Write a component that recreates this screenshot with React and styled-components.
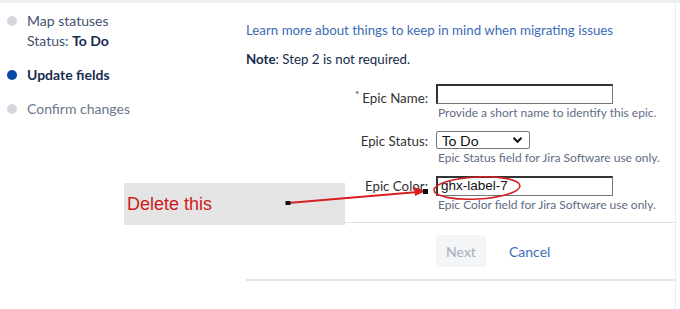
import React from "react";
import styled, { createGlobalStyle } from "styled-components";

const Global = createGlobalStyle`
  html, body {
    margin: 0;
    padding: 0;
    background: #fff;
  }
  body {
    font-family: Lato, "Open Sans", sans-serif;
    color: #172b4d;
  }
`;

const steps = [
  { title: "Map statuses", sub: "To Do", state: "done" },
  { title: "Update fields", state: "current" },
  { title: "Confirm changes", state: "todo" },
];

const fields = [
  {
    label: "Epic Name:",
    required: true,
    kind: "text",
    value: "",
    help: "Provide a short name to identify this epic.",
  },
  {
    label: "Epic Status:",
    kind: "select",
    value: "To Do",
    help: "Epic Status field for Jira Software use only.",
  },
  {
    label: "Epic Color:",
    kind: "text",
    value: "ghx-label-7",
    help: "Epic Color field for Jira Software use only.",
  },
];

const App = () => {
  return (
    <Page>
      <Global />
      <TopStrip />
      <Layout>
        <Sidebar>
          {steps.map((s) => (
            <Step key={s.title}>
              <Dot $state={s.state} />
              <StepText $state={s.state}>
                <div>{s.title}</div>
                {s.sub && (
                  <div>
                    Status: <b>{s.sub}</b>
                  </div>
                )}
              </StepText>
            </Step>
          ))}
        </Sidebar>

        <Main>
          <LearnLink href="#">
            Learn more about things to keep in mind when migrating issues
          </LearnLink>
          <Note>
            <b>Note</b>: Step 2 is not required.
          </Note>

          <Form>
            {fields.map((f) => (
              <Row key={f.label}>
                <Label>
                  {f.required && <Req>*</Req>}
                  {f.label}
                </Label>
                <Field>
                  {f.kind === "select" ? (
                    <Select>
                      <span>{f.value}</span>
                      <svg width="11" height="8" viewBox="0 0 11 8">
                        <path
                          d="M1.5 1.8 L5.5 5.8 L9.5 1.8"
                          fill="none"
                          stroke="#111"
                          strokeWidth="2"
                        />
                      </svg>
                    </Select>
                  ) : (
                    <TextInput>{f.value}</TextInput>
                  )}
                  <Help>{f.help}</Help>
                </Field>
              </Row>
            ))}
          </Form>

          <Buttons>
            <NextButton disabled>Next</NextButton>
            <CancelLink href="#">Cancel</CancelLink>
          </Buttons>
        </Main>
      </Layout>

      <Callout>Delete this</Callout>
      <Markup width="680" height="309" viewBox="0 0 680 309">
        <ellipse
          cx="477"
          cy="188"
          rx="43"
          ry="11"
          fill="none"
          stroke="#d42020"
          strokeWidth="1.6"
          transform="rotate(-3 477 188)"
        />
        <line
          x1="288"
          y1="203"
          x2="418"
          y2="192"
          stroke="#d42020"
          strokeWidth="2"
        />
        <path d="M426 191 L414 187 L415 196 Z" fill="#d42020" />
        <rect x="285.5" y="201" width="5" height="4" fill="#111" />
        <rect x="423" y="189" width="5" height="5" fill="#111" />
      </Markup>
    </Page>
  );
};

const Page = styled.div`
  position: relative;
  width: 680px;
  height: 309px;
  overflow: hidden;
  background: #fff;
`;

const TopStrip = styled.div`
  height: 3px;
  background: #eeeff1;
`;

const Layout = styled.div`
  display: flex;
  height: 306px;
`;

const Sidebar = styled.div`
  width: 246px;
  padding-top: 8px;
  box-sizing: border-box;
`;

const Step = styled.div`
  display: flex;
  align-items: flex-start;
  margin-bottom: 14px;
`;

const Dot = styled.span`
  width: 10px;
  height: 10px;
  border-radius: 50%;
  margin: 5px 10px 0 7px;
  flex-shrink: 0;
  background: ${(p) => (p.$state === "current" ? "#0747a6" : "#d5d7dc")};
`;

const StepText = styled.div`
  font-size: 14px;
  line-height: 20px;
  color: ${(p) =>
    p.$state === "current" ? "#172b4d" : p.$state === "todo" ? "#6b778c" : "#42526e"};
  font-weight: ${(p) => (p.$state === "current" ? 700 : 400)};

  b {
    color: #172b4d;
  }
`;

const Main = styled.div`
  flex: 1;
  margin-right: 4px;
  border-right: 1px solid #ebecf0;
  display: flex;
  flex-direction: column;
  padding-top: 17px;
  font-size: 13.3px;
`;

const LearnLink = styled.a`
  line-height: 20px;
  color: #3b6cb4;
  text-decoration: none;
  align-self: flex-start;
`;

const Note = styled.p`
  margin: 9px 0 0;
  line-height: 20px;
  color: #172b4d;
`;

const Form = styled.div`
  margin-top: 15px;
  display: flex;
  flex-direction: column;
  gap: 10px;
  padding-bottom: 9px;
  border-bottom: 1px solid #dfe1e6;
`;

const Row = styled.div`
  display: grid;
  grid-template-columns: 182px 1fr;
  column-gap: 8px;
`;

const Label = styled.label`
  text-align: right;
  line-height: 20px;
  color: #333;
`;

const Req = styled.span`
  font-size: 10px;
  vertical-align: 5px;
  margin-right: 3px;
`;

const Field = styled.div`
  display: flex;
  flex-direction: column;
  align-items: flex-start;
`;

const TextInput = styled.div`
  width: 177px;
  height: 20px;
  box-sizing: border-box;
  border: 1px solid #767676;
  border-top: 2px solid #333;
  border-left: 2px solid #333;
  font-family: "Liberation Sans", Arial, sans-serif;
  font-size: 13.5px;
  line-height: 16px;
  padding-left: 3px;
  color: #111;
`;

const Select = styled.div`
  width: 94px;
  height: 18px;
  box-sizing: border-box;
  border: 1px solid #767676;
  border-radius: 2px;
  display: flex;
  align-items: center;
  justify-content: space-between;
  padding: 0 6px 0 5px;
  font-size: 14px;
  color: #111;
`;

const Help = styled.div`
  font-size: 12px;
  line-height: 16px;
  color: #5e6c84;
  margin-top: 1px;
  padding-left: 2px;
`;

const Buttons = styled.div`
  display: flex;
  align-items: center;
  gap: 23px;
  padding: 12px 0 12px 190px;
  border-bottom: 2px solid #e4e5e8;
`;

const NextButton = styled.button`
  width: 50px;
  height: 32px;
  border: none;
  border-radius: 3px;
  background: #f4f5f7;
  color: #a5adba;
  font-family: inherit;
  font-size: 14px;
`;

const CancelLink = styled.a`
  font-size: 14px;
  color: #3b6cb4;
  text-decoration: none;
`;

const Callout = styled.div`
  position: absolute;
  left: 124px;
  top: 183px;
  width: 221px;
  height: 42px;
  background: #e4e4e4;
  box-sizing: border-box;
  padding: 11px 0 0 3px;
  font-family: "Liberation Sans", Arial, sans-serif;
  font-size: 18px;
  color: #d01a1a;
`;

const Markup = styled.svg`
  position: absolute;
  left: 0;
  top: 0;
  pointer-events: none;
`;

export default App;
